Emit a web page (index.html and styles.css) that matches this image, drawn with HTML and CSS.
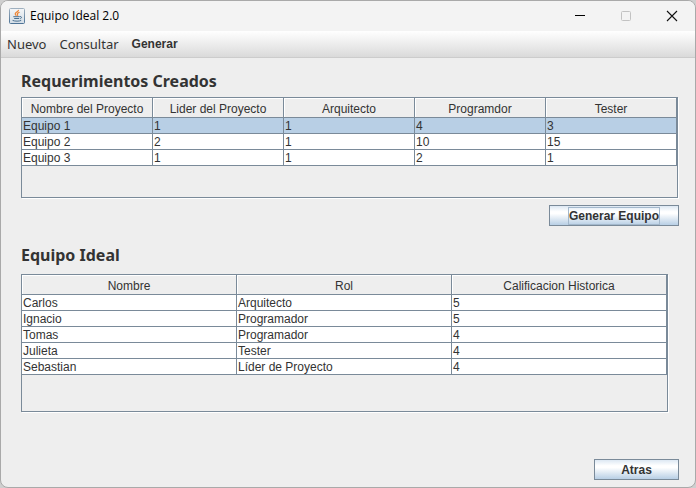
FILE: index.html
```html
<!DOCTYPE html>
<html lang="es">
<head>
<meta charset="utf-8">
<title>Equipo Ideal 2.0</title>
<link rel="stylesheet" href="styles.css">
</head>
<body>
<div class="window">
  <header class="titlebar">
    <svg class="app-icon" viewBox="0 0 16 16" aria-hidden="true">
      <defs>
        <linearGradient id="frame" x1="0" y1="0" x2="0" y2="1"><stop offset="0" stop-color="#9fb0bf"/><stop offset="1" stop-color="#4d7396"/></linearGradient>
        <linearGradient id="face" x1="0" y1="0" x2="0" y2="1"><stop offset="0" stop-color="#f4f6f8"/><stop offset="1" stop-color="#d3dde6"/></linearGradient>
      </defs>
      <rect x=".5" y=".5" width="15" height="15" rx="1" fill="url(#face)" stroke="url(#frame)"/>
      <path d="M9.500 1.800C9.800 3.800 5.900 4.200 6.200 6c.1.700.9 1.100 1.100 1.900M10.600 4.200C8.800 4.900 8 5.500 8.400 6.300c.3.600.5.900.1 1.600" fill="none" stroke="#ee8433" stroke-width="1.200"/>
      <path d="M4.300 8.700h6.500M5.200 10.500h5M11 8.600c2-.3 2 1.500.2 2.200M3.600 12.400c2.400 1 6.600 1 8.600 0" fill="none" stroke="#4a7091"/>
    </svg>
    <span class="title">Equipo Ideal 2.0</span>
    <div class="controls">
      <button class="control" aria-label="Minimizar"><svg viewBox="0 0 12 12"><path d="M1 5.500h10" stroke="#000"/></svg></button>
      <button class="control" aria-label="Maximizar" disabled><svg viewBox="0 0 12 12"><rect x="1.500" y="1.500" width="9" height="9" rx="1" fill="none" stroke="#c2c2c2"/></svg></button>
      <button class="control" aria-label="Cerrar"><svg viewBox="0 0 12 12"><path d="M1 1l10 10M11 1L1 11" stroke="#111" stroke-width="1.100"/></svg></button>
    </div>
  </header>
  <nav class="menubar">
    <button class="menu">Nuevo</button>
    <button class="menu">Consultar</button>
    <button class="menu menu-strong">Generar</button>
  </nav>
  <main class="content">
    <section>
      <h2>Requerimientos Creados</h2>
      <div class="scroll scroll-requests">
        <table>
          <thead><tr><th>Nombre del Proyecto</th><th>Lider del Proyecto</th><th>Arquitecto</th><th>Programdor</th><th>Tester</th></tr></thead>
          <tbody>
            <tr class="selected"><td>Equipo 1</td><td>1</td><td>1</td><td>4</td><td>3</td></tr>
            <tr><td>Equipo 2</td><td>2</td><td>1</td><td>10</td><td>15</td></tr>
            <tr><td>Equipo 3</td><td>1</td><td>1</td><td>2</td><td>1</td></tr>
          </tbody>
        </table>
      </div>
      <div class="actions"><button class="button button-wide"><span class="focus">Generar Equipo</span></button></div>
    </section>
    <section class="team">
      <h2>Equipo Ideal</h2>
      <div class="scroll scroll-team">
        <table>
          <thead><tr><th>Nombre</th><th>Rol</th><th>Calificacion Historica</th></tr></thead>
          <tbody>
            <tr><td>Carlos</td><td>Arquitecto</td><td>5</td></tr>
            <tr><td>Ignacio</td><td>Programador</td><td>5</td></tr>
            <tr><td>Tomas</td><td>Programador</td><td>4</td></tr>
            <tr><td>Julieta</td><td>Tester</td><td>4</td></tr>
            <tr><td>Sebastian</td><td>Líder de Proyecto</td><td>4</td></tr>
          </tbody>
        </table>
      </div>
    </section>
    <div class="actions actions-bottom"><button class="button">Atras</button></div>
  </main>
</div>
</body>
</html>
```
FILE: styles.css
```css
* { box-sizing: border-box; }

body {
  margin: 0;
  background: #cfcfcf;
  color: #333;
  font: 12px/14px "Liberation Sans", Arial, sans-serif;
}

button {
  margin: 0;
  padding: 0;
  border: 0;
  background: none;
  color: inherit;
  font: inherit;
}

.window {
  display: flex;
  flex-direction: column;
  min-height: 100vh;
  border: 1px solid #a9a9a9;
  border-radius: 8px;
  background: #eee;
  overflow: hidden;
}

.titlebar {
  display: flex;
  align-items: center;
  height: 30px;
  padding-left: 8px;
  background: #f3f3f3;
}

.app-icon { width: 16px; height: 16px; }

.title {
  margin-left: 5px;
  color: #000;
  font: 12px/16px "Open Sans", "Noto Sans", sans-serif;
}

.controls { display: flex; margin-left: auto; }

.control {
  display: grid;
  place-items: center;
  width: 46px;
  height: 28px;
}

.control svg { width: 12px; height: 12px; }

.menubar {
  display: flex;
  align-items: center;
  gap: 13px;
  height: 27px;
  padding-left: 6px;
  border-bottom: 1px solid #ccc;
  background: linear-gradient(#fff, #dadada);
}

.menu { font: 13px/20px "Noto Sans", "Open Sans", sans-serif; }

.menu-strong { font: bold 12px/20px "Liberation Sans", Arial, sans-serif; }

.content {
  display: flex;
  flex: 1;
  flex-direction: column;
  padding: 12px 16px 7px 20px;
}

h2 {
  margin: 0 0 5px;
  font: bold 16px/22px "Noto Sans", "DejaVu Sans", sans-serif;
}

.scroll {
  border: 1px solid #7a8a99;
  box-shadow: 1px 1px #fff;
}

.scroll-requests { min-height: 101px; margin-right: 1px; }

.scroll-team { min-height: 138px; margin-right: 11px; }

table {
  width: 100%;
  border-collapse: separate;
  border-spacing: 0;
  table-layout: fixed;
}

th, td {
  padding: 1px 1px 0;
  border: solid #7a8a99;
  border-width: 0 1px 1px 0;
}

th {
  height: 20px;
  padding-top: 3px;
  box-shadow: inset 1px 1px #fff;
  font-weight: normal;
}

td {
  height: 16px;
  background: #fff;
  text-align: left;
}

.selected td { background: #b8cfe5; }

.actions {
  display: flex;
  justify-content: flex-end;
  padding-top: 7px;
}

.actions-bottom { margin-top: auto; }

.button {
  min-width: 85px;
  height: 21px;
  border: 1px solid #7a8a99;
  background: linear-gradient(#dde8f3, #fff 30%, #fff 40%, #b8cfe5);
  font-weight: bold;
}

.button-wide { min-width: 130px; }

.focus {
  display: inline-block;
  height: 16px;
  padding-top: 1px;
  outline: 1px solid #a3b8cc;
}

.team { padding-top: 18px; }

.team h2 { margin-bottom: 8px; }
```
